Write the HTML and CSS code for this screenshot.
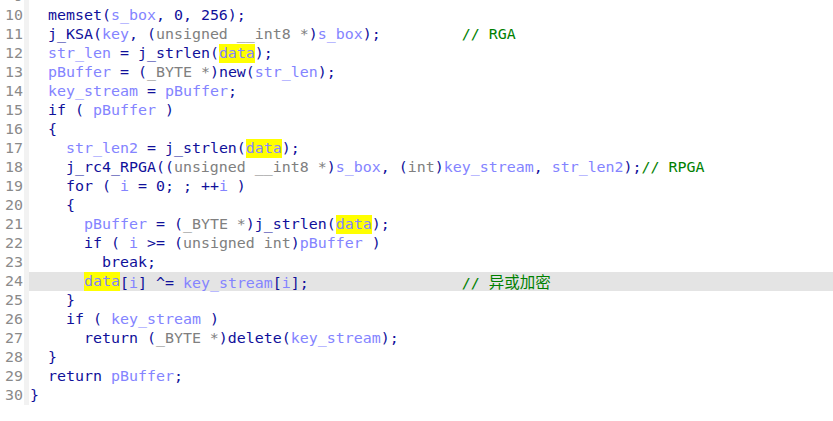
FILE: index.html
```html
<!DOCTYPE html>
<html>
<head>
<meta charset="utf-8">
<link rel="stylesheet" href="styles.css">
</head>
<body>
<div class="editor">
  <div class="gutter">
    <div>9</div><div>10</div><div>11</div><div>12</div><div>13</div><div>14</div><div>15</div><div>16</div><div>17</div><div>18</div><div>19</div><div>20</div><div>21</div><div>22</div><div>23</div><div>24</div><div>25</div><div>26</div><div>27</div><div>28</div><div>29</div><div>30</div>
  </div>
  <div class="code">
<div class="ln"> </div>
<div class="ln">  memset(<span class="v">s_box</span>, 0, 256);</div>
<div class="ln">  j_KSA(<span class="v">key</span>, (<span class="t">unsigned __int8 *</span>)<span class="v">s_box</span>);         <span class="c">// RGA</span></div>
<div class="ln">  <span class="v">str_len</span> = j_strlen(<span class="v hl">data</span>);</div>
<div class="ln">  <span class="v">pBuffer</span> = (<span class="t">_BYTE *</span>)new(<span class="v">str_len</span>);</div>
<div class="ln">  <span class="v">key_stream</span> = <span class="v">pBuffer</span>;</div>
<div class="ln">  if ( <span class="v">pBuffer</span> )</div>
<div class="ln">  {</div>
<div class="ln">    <span class="v">str_len2</span> = j_strlen(<span class="v hl">data</span>);</div>
<div class="ln">    j_rc4_RPGA((<span class="t">unsigned __int8 *</span>)<span class="v">s_box</span>, (<span class="t">int</span>)<span class="v">key_stream</span>, <span class="v">str_len2</span>);<span class="c">// RPGA</span></div>
<div class="ln">    for ( <span class="v">i</span> = 0; ; ++<span class="v">i</span> )</div>
<div class="ln">    {</div>
<div class="ln">      <span class="v">pBuffer</span> = (<span class="t">_BYTE *</span>)j_strlen(<span class="v hl">data</span>);</div>
<div class="ln">      if ( <span class="v">i</span> &gt;= (<span class="t">unsigned int</span>)<span class="v">pBuffer</span> )</div>
<div class="ln">        break;</div>
<div class="ln cur">      <span class="v hl">data</span>[<span class="v">i</span>] ^= <span class="v">key_stream</span>[<span class="v">i</span>];                 <span class="c">// <span class="cjk">异或加密</span></span></div>
<div class="ln">    }</div>
<div class="ln">    if ( <span class="v">key_stream</span> )</div>
<div class="ln">      return (<span class="t">_BYTE *</span>)delete(<span class="v">key_stream</span>);</div>
<div class="ln">  }</div>
<div class="ln">  return <span class="v">pBuffer</span>;</div>
<div class="ln">}</div>
  </div>
</div>
</body>
</html>
```

FILE: styles.css
```css
html, body {
  margin: 0;
  padding: 0;
  background: #ffffff;
  overflow: hidden;
}

.editor {
  display: flex;
  margin-top: -13px;
  font-family: "DejaVu Sans Mono", "Liberation Mono", monospace;
  font-size: 14.95px;
  line-height: 19px;
}

.gutter {
  width: 23px;
  padding-right: 1px;
  border-right: 5px solid #f2f2f2;
  text-align: right;
  color: #8a8a8a;
  flex: none;
}

.gutter div {
  height: 19px;
}

.code {
  flex: 1;
  color: #10109a;
}

.ln {
  height: 19px;
  white-space: pre;
  padding-left: 1px;
}

.ln.cur {
  background: #e4e4e4;
}

.v {
  color: #8484ff;
}

.t {
  color: #808080;
}

.c {
  color: #008000;
}

.cjk {
  font-family: "Noto Sans CJK SC", sans-serif;
  font-size: 15.5px;
}

.hl {
  background: #ffff00;
  display: inline-block;
  height: 19px;
  vertical-align: top;
}
```
